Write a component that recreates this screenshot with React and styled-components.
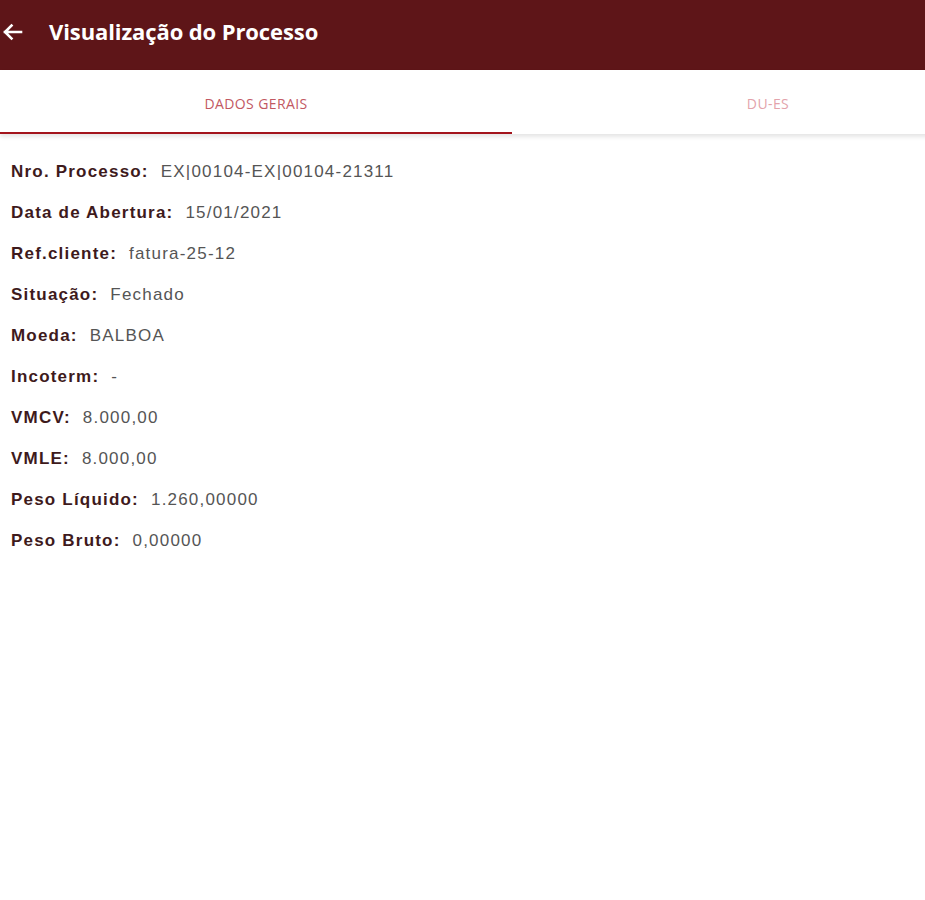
import React from "react";
import styled, { createGlobalStyle } from "styled-components";

const Global = createGlobalStyle`
  html, body { margin: 0; padding: 0; background: #fff; }
  body { font-family: "Liberation Sans", Arial, sans-serif; overflow: hidden; }
`;

const Page = styled.div`
  width: 925px;
  min-height: 900px;
  overflow: hidden;
  background: #fff;
`;

const Header = styled.header`
  height: 70px;
  background: #5e1518;
  display: flex;
  align-items: center;
  padding-left: 2px;
  color: #fff;
`;

const BackButton = styled.span`
  display: flex;
  align-items: center;
  width: 21px;
  height: 20px;
  margin-top: -6px;
`;

const Title = styled.h1`
  margin: 0 0 8px 26px;
  font-family: "Open Sans", sans-serif;
  font-weight: 700;
  font-size: 22px;
  letter-spacing: -0.1px;
`;

const TabBar = styled.nav`
  display: flex;
  width: 1024px;
  height: 64px;
  box-shadow: 0 3px 4px rgba(0, 0, 0, 0.1);
`;

const Tab = styled.div`
  width: 512px;
  display: flex;
  align-items: center;
  justify-content: center;
  padding-top: 5px;
  box-sizing: border-box;
  font-family: "Open Sans", sans-serif;
  font-size: 14px;
  letter-spacing: 0.4px;
  color: ${(p) => (p.$active ? "#c25862" : "#e3a3ab")};
  border-bottom: 2px solid ${(p) => (p.$active ? "#a3141c" : "transparent")};
`;

const Details = styled.section`
  padding: 28px 0 0 11px;
  display: flex;
  flex-direction: column;
  gap: 21px;
`;

const Row = styled.div`
  display: flex;
  gap: 12px;
  font-size: 17px;
  line-height: 20px;
  letter-spacing: 1.2px;
`;

const Label = styled.span`
  font-weight: 700;
  color: #3e1a1c;
`;

const Value = styled.span`
  color: #555;
`;

const rows = [
  ["Nro. Processo:", "EX|00104-EX|00104-21311"],
  ["Data de Abertura:", "15/01/2021"],
  ["Ref.cliente:", "fatura-25-12"],
  ["Situação:", "Fechado"],
  ["Moeda:", "BALBOA"],
  ["Incoterm:", "-"],
  ["VMCV:", "8.000,00"],
  ["VMLE:", "8.000,00"],
  ["Peso Líquido:", "1.260,00000"],
  ["Peso Bruto:", "0,00000"],
];

export default function App() {
  return (
    <Page>
      <Global />
      <Header>
        <BackButton>
          <svg width="21" height="20" viewBox="0 0 21 20" fill="none" stroke="#fff" strokeWidth="2.6" strokeLinecap="square">
            <path d="M19 10H3M9.5 3.5L3 10l6.5 6.5" />
          </svg>
        </BackButton>
        <Title>Visualização do Processo</Title>
      </Header>
      <TabBar>
        <Tab $active>DADOS GERAIS</Tab>
        <Tab>DU-ES</Tab>
      </TabBar>
      <Details>
        {rows.map(([l, v]) => (
          <Row key={l}>
            <Label>{l}</Label>
            <Value>{v}</Value>
          </Row>
        ))}
      </Details>
    </Page>
  );
}
